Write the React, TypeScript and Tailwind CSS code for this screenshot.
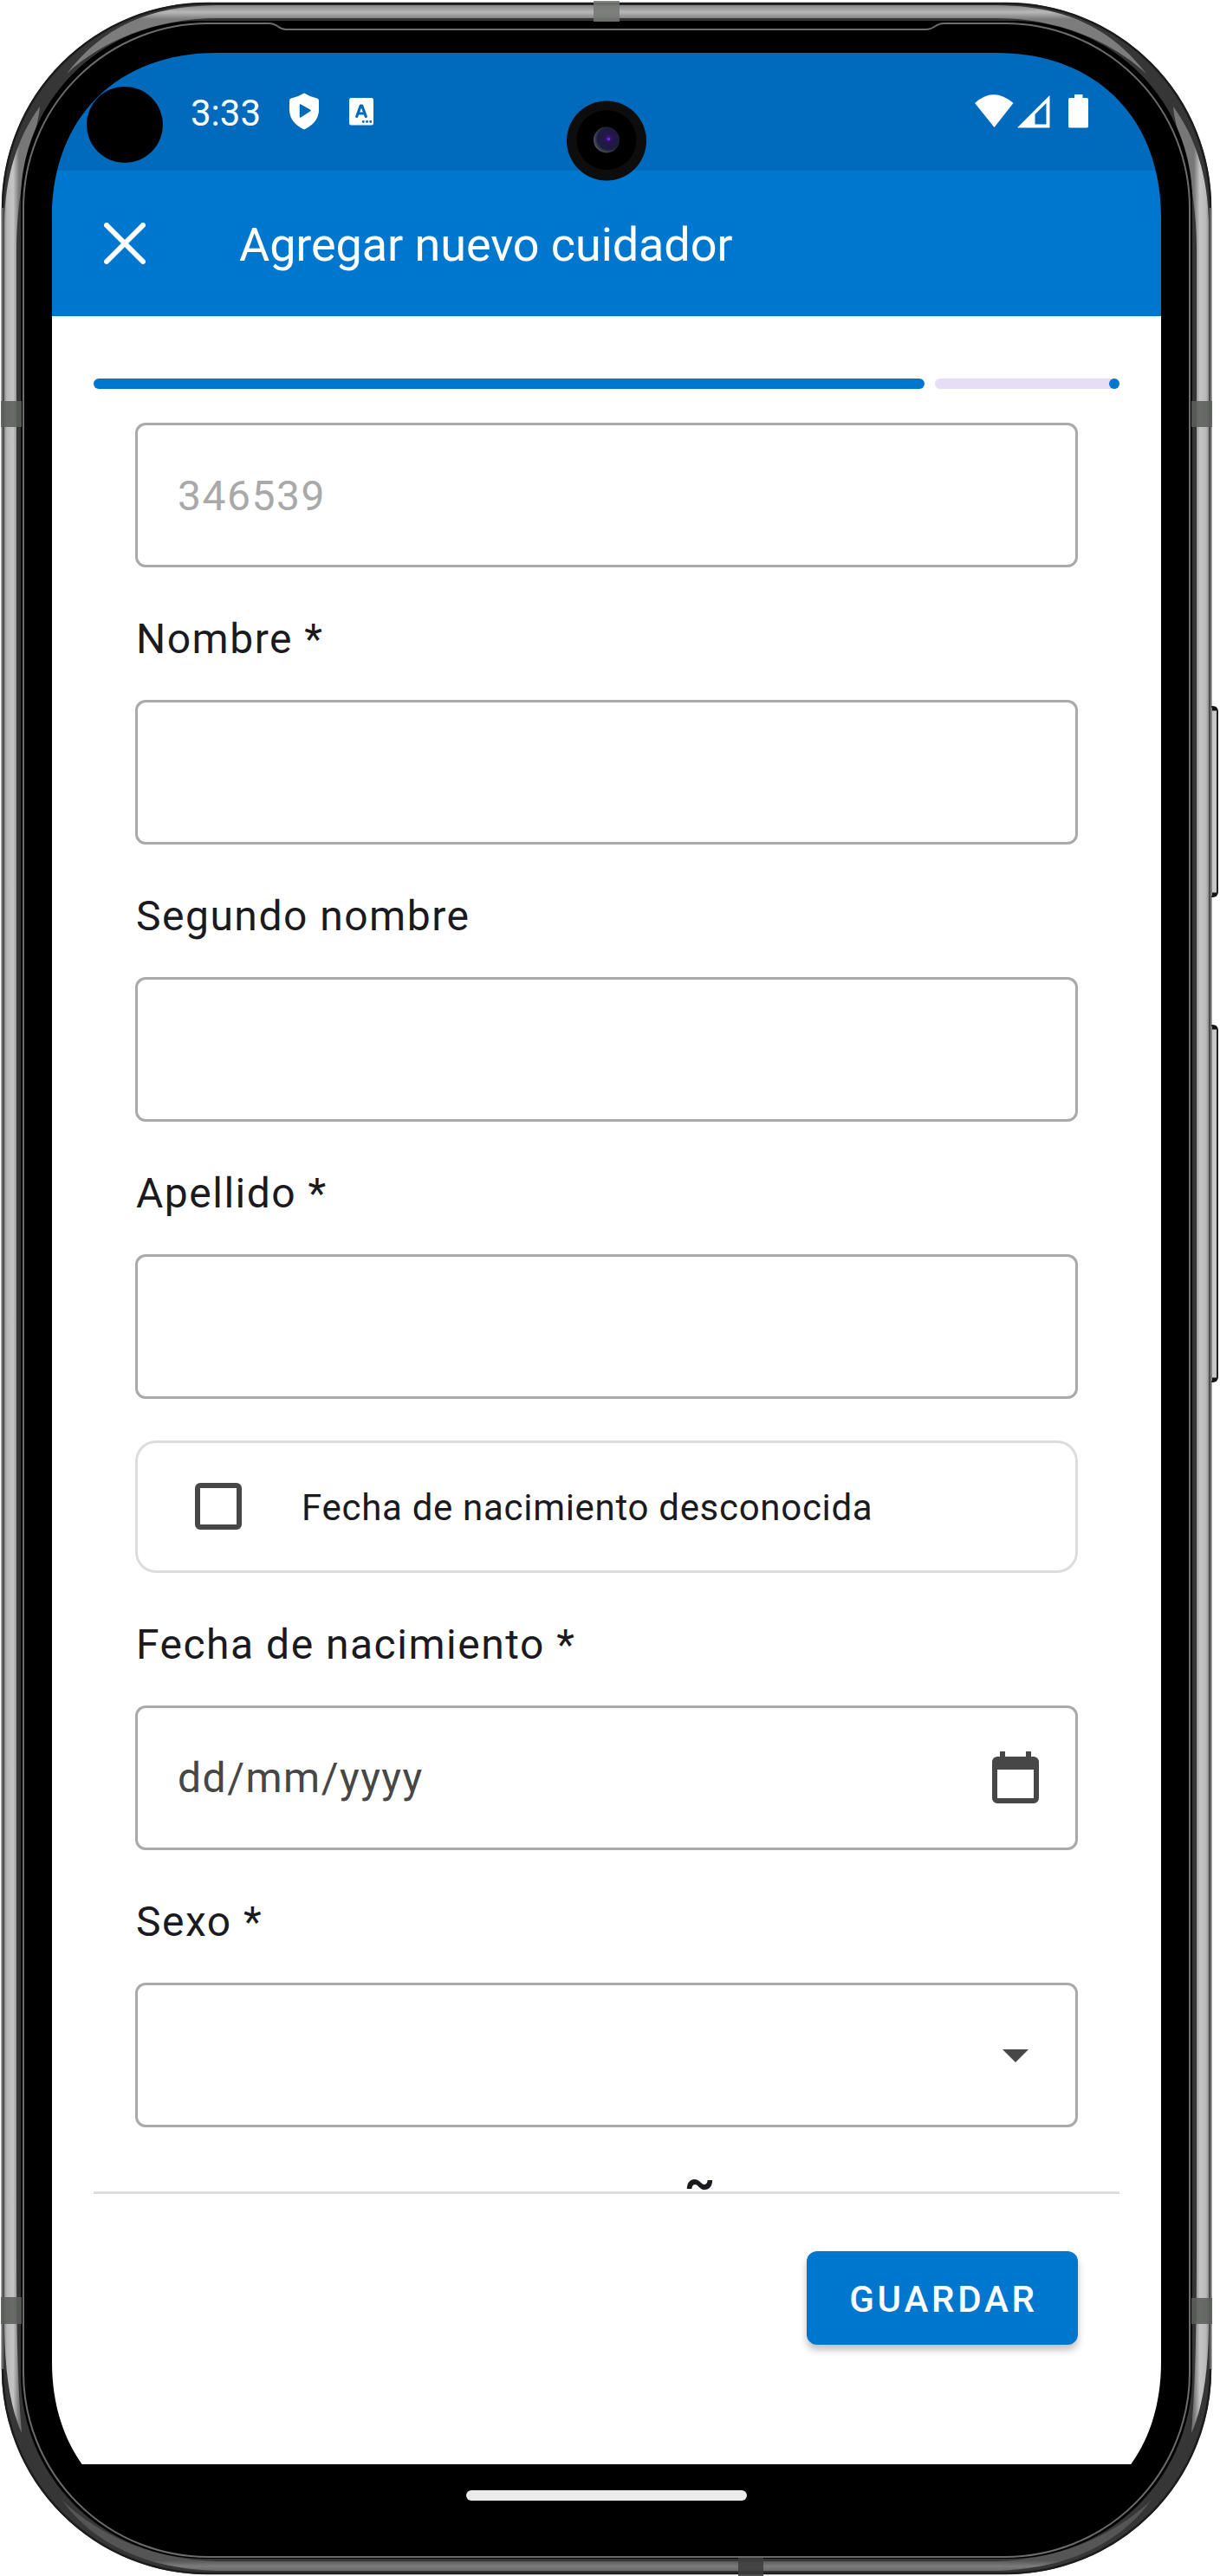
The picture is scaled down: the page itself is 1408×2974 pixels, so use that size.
import type { ReactNode } from "react";

function StatusBar() {
  return (
    <div className="h-[136px] shrink-0 bg-[#006bbd] flex items-start pl-[160px] pr-[84px] text-white">
      <span className="pt-[45px] text-[42px] leading-[50px] w-[114px] whitespace-nowrap">3:33</span>
      <svg className="mt-[46px]" width="34" height="44" viewBox="0 0 34 44">
        <path d="M17 0.5 Q24 5 32 6.5 Q34 7 34 9.500 V21 Q33 35 17 42.500 Q1 35 0 21 V9.500 Q0 7 2 6.500 Q10 5 17 0.500Z" fill="#fff" />
        <path d="M12.500 14 L24 20.500 L12.500 28Z" fill="#006bbd" stroke="#006bbd" strokeWidth="1.500" strokeLinejoin="round" />
      </svg>
      <svg className="mt-[52px] ml-[35px]" width="28" height="32" viewBox="0 0 28 32">
        <rect width="28" height="31.500" rx="2.500" fill="#fff" />
        <path d="M8.700 21.500 L13.200 9.200 H14.800 L19.300 21.500 M10.500 18 H17.500" fill="none" stroke="#006bbd" strokeWidth="3.200" strokeLinecap="round" strokeLinejoin="round" />
        <path d="M16.200 27.500h.1M20.500 27.500h.1M24.700 27.500h.1" stroke="#006bbd" strokeWidth="2.800" strokeLinecap="round" />
      </svg>
      <svg className="ml-auto mt-[47px]" width="132" height="42" viewBox="0 0 132 42">
        <path d="M1 11 Q22.500 -8.500 45.500 11 L23.500 39Z" fill="#fff" />
        <path fillRule="evenodd" d="M50 39.500 L87.500 2 V39.500Z M70.500 24 L83.500 11 V35.500 H70.500Z" fill="#fff" />
        <path d="M116 1 h9.500 v4 h4.500 q2 0 2 2 v31 q0 1.500 -2 1.500 h-19 q-2 0 -2 -1.500 v-31 q0 -2 2 -2 h5Z" fill="#fff" />
      </svg>
    </div>
  );
}

function AppBar() {
  return (
    <div className="h-[168px] shrink-0 bg-[#0077cf] flex items-center pl-[60px] text-white">
      <svg width="48" height="48" viewBox="0 0 48 48">
        <path d="M3 3 L45 45 M45 3 L3 45" stroke="#fff" strokeWidth="6" strokeLinecap="round" />
      </svg>
      <h1 className="ml-[108px] pt-[4px] text-[54px] leading-[64px] tracking-[-0.1px] whitespace-nowrap">Agregar nuevo cuidador</h1>
    </div>
  );
}

function Label({ children }: { children: ReactNode }) {
  return (
    <div className="h-[153px] pt-[55px] pl-[1px] text-[48px] leading-[56px] tracking-[1.5px] text-[#1b1b1f] whitespace-nowrap">{children}</div>
  );
}

function Field({ children }: { children?: ReactNode }) {
  return (
    <div className="h-[167px] border-[3px] border-[#a9a9a9] rounded-[12px] flex items-center justify-between pl-[46px] pr-[42px] text-[48px] leading-[56px] tracking-[1.5px] text-[#464746]">
      {children}
    </div>
  );
}

function Highlights() {
  return (
    <>
      <path d="M5 255 C6 205 20 158 46 123 C43 160 20 195 19 285 V2600 C19 2700 21 2760 25 2809 C12 2780 6 2740 5 2690Z" fill="url(#side)" />
      <path d="M701 6 H250 C170 7 118 32 77 85 C118 47 180 21 250 21 H701Z" fill="url(#top)" />
      <path d="M701 2968 H250 C170 2966 108 2937 72 2887 C118 2930 180 2955 250 2957 H701Z" fill="url(#bottom)" />
    </>
  );
}

function DeviceFrame() {
  return (
    <svg className="absolute inset-0 pointer-events-none" width="1408" height="2974" viewBox="0 0 1408 2974">
      <defs>
        <linearGradient id="side" gradientUnits="userSpaceOnUse" x1="5" y1="0" x2="22" y2="0">
          <stop offset="0" stopColor="#929292" />
          <stop offset=".2" stopColor="#b9b9b9" />
          <stop offset=".6" stopColor="#c5c5c5" />
          <stop offset="1" stopColor="#777" />
        </linearGradient>
        <linearGradient id="top" gradientUnits="userSpaceOnUse" x1="0" y1="6" x2="0" y2="22">
          <stop offset="0" stopColor="#858585" />
          <stop offset=".5" stopColor="#b8b8b8" />
          <stop offset="1" stopColor="#7c7c7c" />
        </linearGradient>
        <linearGradient id="bottom" gradientUnits="userSpaceOnUse" x1="0" y1="2956" x2="0" y2="2969">
          <stop offset="0" stopColor="#555" />
          <stop offset=".5" stopColor="#7b7b7b" />
          <stop offset="1" stopColor="#666" />
        </linearGradient>
        <radialGradient id="lens" cx=".58" cy=".45" r=".6">
          <stop offset="0" stopColor="#4a1fa0" />
          <stop offset=".25" stopColor="#271450" />
          <stop offset=".7" stopColor="#1b1d3a" />
          <stop offset="1" stopColor="#5a5560" />
        </radialGradient>
        <g id="half-highlights">
          <Highlights />
        </g>
      </defs>

      {/* side buttons */}
      <rect x="1392" y="816" width="13" height="219" rx="5" fill="#c8c8c8" stroke="#222" strokeWidth="2" />
      <rect x="1392" y="1184" width="13" height="411" rx="5" fill="#c8c8c8" stroke="#222" strokeWidth="2" />
      <path d="M1399 818.500h5M1399 1032.500h5M1399 1186.500h5M1399 1592.500h5" stroke="#111" strokeWidth="4" />

      {/* metal band */}
      <path fillRule="evenodd" fill="#363636" d="M239 3 H1161 A237 237 0 0 1 1398 240 V2735 A237 237 0 0 1 1161 2972 H239 A237 237 0 0 1 2 2735 V240 A237 237 0 0 1 239 3Z M240 40 A200 200 0 0 0 40 240 V2735 A200 200 0 0 0 240 2935 H1160 A200 200 0 0 0 1360 2735 V240 A200 200 0 0 0 1160 40Z" />
      <rect x="3" y="4" width="1394" height="2967" rx="236" fill="none" stroke="#1c1c1c" strokeWidth="2.500" />
      <path d="M3 240V2735M1397 240V2735" stroke="#666" strokeWidth="2.500" />
      <use href="#half-highlights" />
      <use href="#half-highlights" transform="translate(1400 0) scale(-1 1)" />

      {/* black bezel with the display opening */}
      <path fillRule="evenodd" fill="#000" d="M230 24 H1170 A207 207 0 0 1 1376 231 V2742 A212 212 0 0 1 1164 2954 H236 A212 212 0 0 1 24 2742 V231 A207 207 0 0 1 230 24Z M60 251 V2727 C60 2842 135 2917 250 2917 H1150 C1265 2917 1340 2842 1340 2727 V251 C1340 136 1265 61 1150 61 H250 C135 61 60 136 60 251Z" />
      <path d="M330 34 C320 34 322 27 310 27 H240 A213 213 0 0 0 27 240 V2739 A213 213 0 0 0 240 2952 H1160 A213 213 0 0 0 1373 2739 V240 A213 213 0 0 0 1160 27 H1090 C1078 27 1080 34 1068 34Z" fill="none" stroke="#6c6c6c" strokeWidth="2" />

      {/* antenna bands */}
      <g fill="#5b5e5b" fillOpacity=".88">
        <rect x="1" y="463" width="24" height="30" />
        <rect x="1375" y="463" width="24" height="30" />
        <rect x="1" y="2652" width="24" height="31" />
        <rect x="1375" y="2653" width="24" height="30" />
        <rect x="685" y="1" width="30" height="24" fill="#747874" />
        <rect x="852" y="2953" width="29" height="21" fill="#3e3e3e" />
      </g>

      {/* punch hole and camera */}
      <circle cx="144" cy="144" r="44" fill="#000" />
      <circle cx="700" cy="162.500" r="46" fill="#0d0d0d" />
      <circle cx="700" cy="161.500" r="34.500" fill="#000" />
      <circle cx="700" cy="161.500" r="15" fill="url(#lens)" />
      <circle cx="702.500" cy="160.500" r="1.500" fill="#7430ff" />
    </svg>
  );
}

export default function App() {
  return (
    <div className="relative w-[1408px] h-[2974px] overflow-hidden bg-white px-[60px] pt-[61px] font-[Roboto,sans-serif]">
      <div className="w-[1280px] h-[2856px] flex flex-col bg-white rounded-[160px] overflow-hidden">
        <StatusBar />
        <AppBar />

        <div className="mt-[72px] mx-[48px] h-[12px] shrink-0 flex gap-[12px]">
          <div className="w-[959px] rounded-full bg-[#0077cf]" />
          <div className="flex-1 rounded-full bg-[#e6def6] flex justify-end">
            <div className="w-[12px] rounded-full bg-[#0077cf]" />
          </div>
        </div>

        <main className="mx-[48px] h-[2084px] shrink-0 px-[48px] pt-[39px] border-b-[3px] border-[#dddddd]">
          <Field>
            <span className="pt-[3px] text-[#a9a9a9]">346539</span>
          </Field>
          <Label>Nombre *</Label>
          <Field />
          <Label>Segundo nombre</Label>
          <Field />
          <Label>Apellido *</Label>
          <Field />
          <div className="mt-[48px] h-[153px] border-[3px] border-[#dddddd] rounded-[24px] flex items-center pl-[66px]">
            <div className="size-[54px] mb-[1px] rounded-[6px] border-[6px] border-[#464746]" />
            <span className="ml-[69px] pt-[3px] text-[42px] leading-[50px] tracking-[0.7px] text-[#1b1b1f] whitespace-nowrap">Fecha de nacimiento desconocida</span>
          </div>
          <Label>Fecha de nacimiento *</Label>
          <Field>
            <span className="pt-[1px]">dd/mm/yyyy</span>
            <svg width="54" height="60" viewBox="0 0 54 60" className="mb-[1px]">
              <path fillRule="evenodd" fill="#464746" d="M9 0h6v6h24V0h6v6h3a6 6 0 0 1 6 6v42a6 6 0 0 1-6 6H6a6 6 0 0 1-6-6V12a6 6 0 0 1 6-6h3Z M6 21V54H48V21Z" />
            </svg>
          </Field>
          <Label>Sexo *</Label>
          <Field>
            <span />
            <svg width="30" height="15" viewBox="0 0 30 15" className="mr-[12px] mt-[2px]">
              <path d="M0 0H30L15 15Z" fill="#464746" />
            </svg>
          </Field>
          <div className="mt-[54px] h-[20px] pl-[634px] text-[54px] leading-[20px] font-bold text-[#1b1b1f]">~</div>
        </main>

        <div className="flex justify-end pr-[96px] pt-[66px]">
          <button className="w-[313px] h-[108px] rounded-[12px] bg-[#0077cf] pt-[2px] pl-[3px] text-white text-[42px] font-medium tracking-[3.75px] shadow-[0_6px_9px_rgba(0,0,0,0.25)]">
            GUARDAR
          </button>
        </div>

        <div className="mt-auto h-[72px] bg-black flex justify-center pt-[30px]">
          <div className="w-[324px] h-[12px] rounded-full bg-[#ebebeb]" />
        </div>
      </div>
      <DeviceFrame />
    </div>
  );
}
